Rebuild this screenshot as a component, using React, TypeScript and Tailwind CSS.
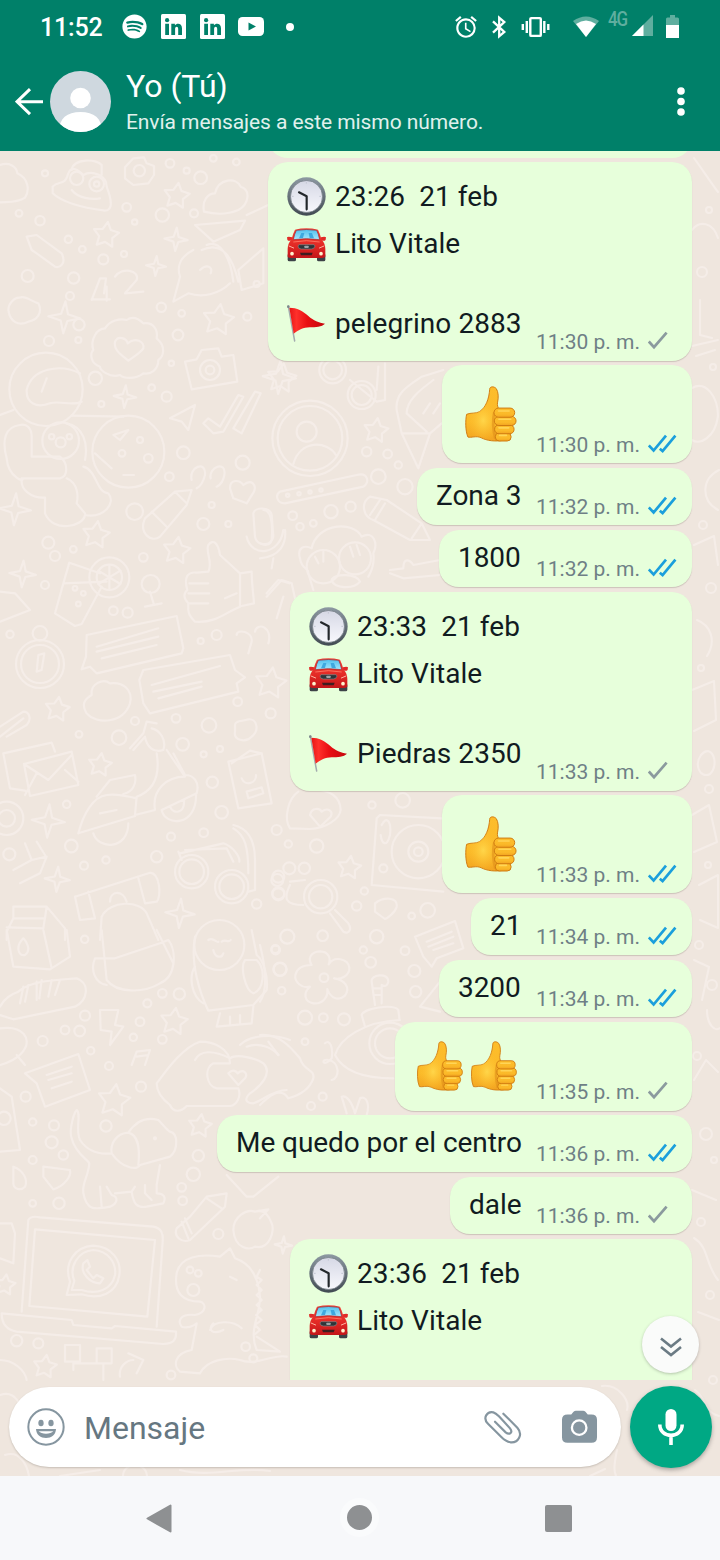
import type { ReactNode } from "react";
import { FaSpotify } from "react-icons/fa";
import { MdAlarm } from "react-icons/md";

type Ride = { time: string; place?: string };
type Message = {
  id: number;
  sentAt?: string;
  read: boolean;
  width: string;
  text?: string;
  ride?: Ride;
  thumbs?: number;
};

const messages: Message[] = [
  { id: 1, sentAt: "11:30 p. m.", read: false, width: "w-[424px]", ride: { time: "23:26  21 feb", place: "pelegrino 2883" } },
  { id: 2, sentAt: "11:30 p. m.", read: true, width: "w-[250px]", thumbs: 1 },
  { id: 3, sentAt: "11:32 p. m.", read: true, width: "w-[275px]", text: "Zona 3" },
  { id: 4, sentAt: "11:32 p. m.", read: true, width: "w-[253px]", text: "1800" },
  { id: 5, sentAt: "11:33 p. m.", read: false, width: "w-[402px]", ride: { time: "23:33  21 feb", place: "Piedras 2350" } },
  { id: 6, sentAt: "11:33 p. m.", read: true, width: "w-[250px]", thumbs: 1 },
  { id: 7, sentAt: "11:34 p. m.", read: true, width: "w-[221px]", text: "21" },
  { id: 8, sentAt: "11:34 p. m.", read: true, width: "w-[253px]", text: "3200" },
  { id: 9, sentAt: "11:35 p. m.", read: false, width: "w-[297px]", thumbs: 2 },
  { id: 10, sentAt: "11:36 p. m.", read: true, width: "w-[475px]", text: "Me quedo por el centro" },
  { id: 11, sentAt: "11:36 p. m.", read: false, width: "w-[242px]", text: "dale" },
  { id: 12, read: false, width: "w-[402px]", ride: { time: "23:36  21 feb" } },
];

/* ---------- Wallpaper ---------- */

function polar(cx: number, cy: number, radii: number[], tilt: number) {
  return radii
    .map((r, i) => {
      const a = ((tilt + (i * 360) / radii.length) * Math.PI) / 180;
      return `${(cx + r * Math.sin(a)).toFixed(1)},${(cy - r * Math.cos(a)).toFixed(1)}`;
    })
    .join(" ");
}

const Stars = ({ at }: { at: number[][] }) => (
  <>
    {at.map(([x, y, r]) => (
      <polygon key={`${x}-${y}`} points={polar(x, y, [r, r * 0.52, r, r * 0.52, r, r * 0.52, r, r * 0.52, r, r * 0.52], 8)} />
    ))}
  </>
);

const Sparkles = ({ at }: { at: number[][] }) => (
  <>
    {at.map(([x, y, r]) => (
      <polygon key={`${x}-${y}`} points={polar(x, y, [r, r * 0.3, r, r * 0.3, r, r * 0.3, r, r * 0.3], 4)} />
    ))}
  </>
);

const Rings = ({ at }: { at: number[][] }) => (
  <>
    {at.map(([x, y, r]) => (
      <circle key={`${x}-${y}-${r}`} cx={x} cy={y} r={r} />
    ))}
  </>
);

function Wallpaper() {
  return (
    <svg className="absolute inset-0 h-full w-full" viewBox="0 151 720 1325" fill="none" stroke="#f5ede8" strokeWidth="6.500" strokeLinecap="round" strokeLinejoin="round">
      <g transform="translate(0 150) scale(.33333)">
        <path d="M0 45C25 35 50 48 52 70C85 85 90 120 75 143C50 160 20 155 0 157" />
        <path d="M215 60C220 25 290 25 305 45V75M158 110C175 90 195 110 205 70C215 45 235 60 250 75C275 60 320 75 320 110C335 150 340 180 315 182C260 175 190 160 158 130ZM215 120C235 145 275 150 300 145" />
        <path d="M400 25L432 22L440 40L462 48V75L445 100L400 105L375 85V52Z" />
        <path d="M612 185C605 150 625 130 645 130C655 85 710 80 722 110C755 120 745 165 715 180C680 195 640 192 612 185ZM585 225L735 212L720 240L640 275ZM605 300C670 270 700 330 715 395M620 285C655 270 690 310 700 395M580 300C540 320 530 350 540 380L520 455L565 430C610 445 660 430 690 400M600 360C620 340 640 350 632 370M715 360L790 295V400L725 420Z" />
        <path d="M740 195L805 165M80 260L110 255L185 310C200 340 180 355 165 350L110 310L95 300Z" />
        <path d="M275 450L300 385H318L312 430M275 448H330M320 410V452M345 380C365 350 420 360 410 390L375 430L430 425" />
        <path d="M25 480C25 460 45 440 60 443C75 435 95 455 115 460C130 490 110 510 85 515C55 530 30 515 25 480Z" />
        <path d="M380 510C400 495 420 510 430 520C460 515 475 540 470 565C500 590 490 620 475 630C475 660 450 675 430 670C405 690 370 685 360 675C330 685 300 660 300 650C270 640 270 610 280 600C270 570 290 535 315 535C330 510 360 505 380 510Z" />
        <path d="M345 575C355 555 380 565 383 580C405 560 435 575 430 595C420 610 400 620 385 632C365 615 340 600 345 575Z" />
        <circle cx="138" cy="718" r="110" />
        <path d="M240 670C180 640 95 655 80 720C78 760 110 775 150 760C180 750 215 770 245 755M125 725L140 685M0 795L40 780M60 825C15 830 5 870 20 925C25 985 80 1000 65 985H180C205 980 205 940 180 920H95V860C95 835 80 820 60 825M215 797L370 800M65 985C60 1020 95 1045 135 1043V1090C160 1150 250 1130 255 1095C310 1105 350 1060 325 1030C290 1030 290 960 250 950M200 985C235 1000 235 1040 230 1060L255 1090M200 820C250 830 265 880 255 930" />
        <circle cx="182" cy="872" r="55" />
        <circle cx="385" cy="905" r="108" />
        <path d="M340 855L385 840L360 870ZM285 910L335 955M370 975H402" />
        <path d="M555 635L590 628L605 600L655 595L665 620L700 615L712 695L575 718Z" />
        <circle cx="630" cy="660" r="30" />
        <path d="M510 805L585 765L565 840L545 815ZM610 820L640 850L670 845L730 740L715 735L660 830L625 805ZM700 835L725 850L782 730L765 725Z" />
        <path d="M575 990C565 950 620 930 615 975C610 995 600 1010 590 1015M632 985C625 950 680 930 673 975C670 995 660 1005 650 1010M690 1015C690 985 720 990 730 1005C755 985 770 1005 762 1025L740 1060L700 1045Z" />
        <path d="M435 1105L525 1025L575 1020L560 1065L480 1160C455 1180 415 1150 435 1105ZM525 1025L560 1060M455 1085L500 1130M760 1090C765 1070 810 1070 815 1095L820 1160C815 1190 770 1190 765 1160ZM740 1160C755 1225 840 1215 850 1140" />
        <Stars at={[[318, 255, 40], [530, 138, 40], [655, 510, 48], [288, 1155, 42], [845, 685, 45]]} />
        <Sparkles at={[[528, 268, 35], [468, 348, 30], [193, 502, 48], [45, 1078, 48], [375, 740, 34]]} />
        <Rings at={[[230, 85, 20], [290, 102, 22], [290, 102, 8], [418, 62, 17], [602, 83, 19], [487, 195, 20], [510, 40, 13], [120, 212, 14], [380, 172, 13], [205, 268, 11], [310, 328, 15], [83, 378, 18], [221, 384, 17], [210, 438, 12], [237, 524, 17], [147, 573, 15], [484, 472, 14], [534, 555, 16], [286, 685, 20], [630, 660, 13], [500, 740, 15], [550, 908, 19], [728, 938, 21], [508, 980, 13], [404, 1085, 25], [610, 1122, 18], [145, 1178, 18], [182, 877, 15], [155, 860, 8], [208, 860, 8], [366, 910, 10], [420, 870, 9], [445, 925, 13], [135, 70, 9], [57, 190, 10], [247, 298, 10], [404, 216, 8], [372, 312, 9], [545, 490, 10], [235, 570, 9], [514, 640, 8], [455, 713, 10], [304, 762, 9], [685, 1122, 9], [635, 1065, 9], [582, 190, 12], [560, 62, 9], [640, 25, 10], [709, 36, 10], [770, 402, 9], [742, 500, 12]]} />
      </g>
      <g transform="translate(0 540) scale(.33333)">
        <path d="M208 68L190 130L165 220L225 258L245 252L305 140M190 130L320 125M208 68L300 100" />
        <circle cx="328" cy="112" r="60" />
        <circle cx="328" cy="112" r="38" />
        <path d="M328 76V148M295 92L361 132M295 132L361 92M450 155L462 195L435 200L485 190M0 155L45 160L90 210L0 245" />
        <circle cx="452" cy="132" r="27" />
        <path d="M625 95C640 65 615 35 625 15C640 -5 655 10 660 45L720 100V200C680 215 650 250 585 245C560 220 565 210 565 190C550 175 550 160 562 150C550 110 565 95 590 98ZM568 130H625M565 160H628M570 190H625M720 100L755 95C755 130 760 160 762 190L725 198M675 175L710 160" />
        <path d="M260 285L530 228L550 325L545 340L290 400L270 380L245 388L258 350ZM290 320L475 265M290 335L475 290M305 355L470 315" />
        <path d="M430 390L690 345L705 390L735 412L710 430L715 455L450 520L430 490L418 420ZM455 435L660 378M460 455L605 425M475 475L605 440" />
        <circle cx="120" cy="372" r="72" />
        <circle cx="120" cy="372" r="57" />
        <circle cx="120" cy="280" r="22" />
        <path d="M110 395L115 345L133 340L125 390ZM275 465C270 430 310 415 330 430C370 425 400 450 390 490C370 550 290 555 260 520C245 495 250 480 275 465Z" />
        <path d="M0 560L70 515C90 515 95 540 80 555L20 590M0 590L70 535M10 640L155 608L165 635M10 640L30 745L75 752M72 672L215 635L235 735L90 768ZM72 672L145 720L215 645M75 765L110 700M235 725L195 690" />
        <path d="M390 625L430 580L440 545L470 550M400 630L435 590C440 620 460 640 490 630C500 600 480 570 455 565M470 640C480 700 465 750 410 770L405 825L465 810C455 750 500 710 555 710L500 630M520 640L555 705C580 705 600 725 590 760L485 810M235 880C250 820 280 770 320 765C350 760 390 770 410 775M235 880L405 828M290 770L330 720L405 705C410 730 400 755 370 762M300 820L350 810M280 880C295 930 385 930 385 850M485 810C495 860 590 860 588 765M510 800C520 825 555 820 552 780M705 555C705 540 730 545 745 538C770 535 780 570 755 590C735 610 700 600 705 575Z" />
        <path d="M685 665L785 640L815 790L715 805ZM695 670L750 632L785 640M725 715C735 740 770 730 768 705M740 755L785 742L790 760L745 775ZM710 285C710 265 760 275 755 305L745 340M765 275C770 245 820 260 805 310M800 160L835 120L868 130M850 170L830 235" />
        <path d="M540 940L670 910C700 920 720 950 718 965M535 935L545 960M555 930L680 925L700 965M700 855C745 865 765 900 765 960V1050L745 1055M700 865C735 885 745 920 745 1000" />
        <circle cx="575" cy="995" r="50" />
        <circle cx="575" cy="995" r="37" />
        <circle cx="695" cy="1040" r="50" />
        <circle cx="695" cy="1040" r="37" />
        <path d="M225 1070L450 998C480 1000 485 1070 470 1085L435 1090L415 1015M225 1070L240 1140L285 1135L265 1055M300 1200L305 1130C330 1080 420 1080 440 1120L475 1200M330 1085C330 1050 370 1050 380 1085M40 1100H140L135 1135H40ZM40 1135L20 1175V1200M20 1162L130 1165L140 1100L195 1165V1200M75 910L95 960L40 990M95 960L140 950L120 1000L60 1030M110 905L135 945" />
        <Stars at={[[172, 508, 38], [300, 675, 36], [812, 430, 48], [530, 32, 42]]} />
        <Sparkles at={[[68, 102, 40], [145, 843, 50], [172, 1018, 38], [540, 1120, 44]]} />
        <Rings at={[[165, 48, 15], [220, 28, 10], [430, 52, 13], [340, 212, 13], [383, 218, 15], [650, 285, 15], [602, 303, 9], [357, 593, 22], [548, 613, 19], [627, 556, 22], [528, 535, 13], [405, 543, 12], [713, 485, 13], [812, 520, 15], [637, 727, 17], [665, 817, 19], [214, 918, 19], [28, 943, 18], [470, 950, 17], [318, 960, 11], [252, 977, 12], [513, 890, 12], [611, 878, 13], [830, 870, 15], [770, 1092, 14], [135, 135, 12], [30, 283, 11], [237, 583, 10], [611, 643, 9], [660, 627, 9], [200, 793, 11], [20, 835, 25], [20, 835, 50], [835, 1010, 18], [835, 1060, 18], [225, 145, 7], [250, 160, 7], [235, 192, 7]]} />
      </g>
      <g transform="translate(0 930) scale(.33333)">
        <path d="M20 0L40 110L150 118L210 80L200 0M130 0L155 115M70 25C45 50 55 80 75 75C95 60 80 35 70 25ZM305 0L320 150C350 190 430 190 480 160C530 140 530 60 505 30L480 40L345 85H285C270 120 285 160 320 165M470 0L520 100M0 230C15 200 40 190 55 185C95 150 170 150 230 145C270 160 265 210 225 230L40 268L0 255M70 170L60 220M85 165L75 215M110 155V210M125 150L118 205M155 150L145 200M180 150L165 195" />
        <circle cx="658" cy="45" r="75" />
        <path d="M585 20C570 100 600 190 625 242L760 225L800 180C805 140 790 90 770 75L755 0M625 30C640 20 650 40 655 35M665 35C675 25 685 40 692 30M640 60C645 85 665 85 670 70M735 90C720 110 735 180 760 190C790 180 800 120 770 90ZM585 110C565 140 575 200 610 220M660 250L650 290L755 280L760 230M690 260V285M720 255V280" />
        <path d="M300 240L355 240L345 285L370 290L330 345L335 305L302 300ZM75 430L235 372L270 480L135 530L110 460ZM140 435L215 410M145 450L215 430M155 475L215 455M395 405L410 365L450 360L435 405M410 380L445 375M0 295C75 285 90 330 75 355C60 385 20 400 0 405M50 375L75 405M0 475L35 500L60 660L0 665" />
        <path d="M470 460C500 420 550 350 600 335C640 335 690 355 690 400H640C610 415 620 470 650 475H715C725 500 710 525 690 528H560C545 545 520 550 510 525C490 510 470 490 470 460ZM585 390C600 360 640 360 690 385M690 385C710 370 770 385 790 400C820 430 780 470 750 490C730 510 740 520 760 520C790 510 820 480 860 480M720 345C750 315 820 310 870 330M740 350C780 335 820 355 835 375M685 430C700 415 710 425 713 430C730 415 745 430 735 445L715 465Z" />
        <path d="M215 625C205 600 225 540 230 540C245 550 225 600 240 630C260 660 290 675 335 670C330 640 350 610 385 608C410 570 440 560 475 570C490 585 500 600 510 605C535 610 535 660 510 680L420 705C415 720 370 720 335 670M215 625C225 670 265 690 268 700C265 740 245 760 250 790C260 840 280 840 330 830C355 820 355 800 335 795L320 770M385 608C415 615 420 660 415 705M345 790L395 785C400 820 410 835 440 830L490 820C500 800 490 790 470 790V765L480 705M405 770L395 785M435 765V790L455 810M300 770L305 830M40 710C70 720 85 750 75 770C60 785 40 775 40 760ZM130 710L210 720C215 740 190 770 160 778L130 740Z" />
        <path d="M85 870C90 860 100 858 120 862L460 890C485 895 490 910 488 935L470 1190M85 870L65 1145M105 898L465 930L442 1160L88 1128ZM5 1150L215 1170L220 1185L335 1195L345 1188L528 1205C530 1230 520 1240 490 1242L50 1205C20 1200 5 1180 5 1150Z" />
        <path d="M200 1095L210 1055C190 1000 225 950 280 947C335 950 365 990 358 1035C350 1090 300 1110 245 1093ZM215 1080L223 1053C205 1010 235 963 280 960C325 962 350 1000 345 1035C335 1080 290 1095 245 1080ZM250 1000C240 1030 270 1060 300 1060L310 1045L290 1035L280 1045L260 1020L270 1010L262 990Z" />
        <path d="M530 895L570 860L620 800L680 790L675 830L570 930C545 940 520 920 530 895ZM555 865L575 910M545 875L565 925M620 805L665 835M765 845C740 835 700 860 700 900C705 960 750 960 765 950C810 960 825 900 815 880C800 840 780 840 765 845ZM765 845L805 838L780 865M680 735L740 800L760 800L835 740" />
        <path d="M530 1030C540 980 600 970 660 980L690 955L705 985C750 1000 775 1040 780 1100C780 1160 745 1200 770 1260L840 1265L770 1220M530 1030C520 1090 550 1115 600 1115C620 1120 620 1150 585 1155C545 1150 530 1170 545 1190C560 1195 580 1190 590 1180L575 1260C520 1270 520 1310 540 1325L600 1330C620 1290 680 1280 720 1290C770 1310 820 1270 860 1280M630 1200C640 1170 700 1170 725 1195M640 1180C620 1200 640 1215 670 1200M690 1040L710 1050M780 1020L770 1040L785 1050L770 1065L785 1080L770 1095L785 1110L770 1125L785 1140L768 1155L785 1170L765 1185L780 1200L762 1215" />
        <path d="M195 1245H240V1295H195ZM290 1255H335V1300H290ZM220 1320V1300H310V1350M385 1270L430 1290L410 1330M360 1340C355 1310 380 1290 400 1290M0 1290C40 1290 75 1320 80 1350M0 880L35 880L45 910L40 1000L0 985" />
        <Stars at={[[522, 275, 42], [342, 512, 50], [600, 588, 36], [135, 1310, 36], [15, 1065, 32]]} />
        <Sparkles at={[[850, 945, 26]]} />
        <Rings at={[[538, 192, 17], [487, 190, 13], [442, 220, 12], [255, 257, 15], [420, 275, 13], [239, 303, 16], [195, 300, 13], [128, 333, 15], [400, 322, 11], [487, 328, 13], [272, 362, 11], [327, 408, 12], [423, 470, 15], [77, 500, 15], [318, 588, 17], [162, 586, 15], [155, 637, 18], [190, 675, 14], [98, 690, 12], [98, 576, 11], [595, 677, 17], [580, 733, 20], [545, 772, 13], [548, 812, 13], [177, 820, 17], [655, 912, 15], [50, 1232, 17], [115, 1240, 15], [570, 1020, 10], [595, 1030, 10], [580, 1080, 18], [827, 60, 13], [840, 118, 19], [845, 182, 11], [737, 1250, 13], [760, 1285, 12], [513, 1335, 13], [12, 565, 20], [254, 28, 11], [465, 625, 3], [98, 820, 10]]} />
      </g>
      <g transform="translate(260 360) scale(.33333)">
        <circle cx="150" cy="235" r="113" />
        <circle cx="150" cy="235" r="97" />
        <circle cx="140" cy="215" r="30" />
        <path d="M100 312C120 240 200 240 228 285M60 395L290 345C325 335 330 370 310 380L75 430C50 430 45 405 60 395ZM120 595C110 560 135 555 155 565C170 490 280 480 305 530C340 510 355 550 340 580M120 595C125 630 145 620 145 640L160 690M340 580C345 620 330 640 325 650M330 410C300 430 310 470 340 480L450 540H510L485 490L380 420ZM375 430L345 480M360 420L330 465M485 490L455 535M10 450C30 450 40 480 35 540C30 560 10 555 0 550M75 510C80 550 60 590 0 595M40 595L35 625M20 710L65 660L95 670L105 715M410 150C405 100 440 80 485 50L550 30M410 150L425 220H510L545 190M510 220L475 325L425 220M440 160C440 120 480 90 520 60M440 160L500 215M490 160L510 130M520 160L540 130M390 630L430 625C430 590 450 600 460 615L540 600M390 640L430 655L540 645M375 10V120L350 125L270 60M355 20L350 90M215 660C220 640 290 640 300 665C280 690 220 685 215 660M165 590L175 610M190 575V605M270 560L280 590M290 555L300 585" />
        <circle cx="218" cy="30" r="40" />
        <circle cx="218" cy="30" r="28" />
        <circle cx="305" cy="105" r="42" />
        <circle cx="305" cy="105" r="30" />
        <circle cx="190" cy="620" r="50" />
        <circle cx="285" cy="595" r="48" />
        <Stars at={[[348, 212, 38]]} />
        <Sparkles at={[[58, 52, 50]]} />
        <Rings at={[[320, 275, 14], [383, 282, 13], [355, 350, 22], [435, 380, 23], [213, 455, 20], [272, 440, 15], [98, 467, 13], [120, 500, 11], [160, 490, 10], [415, 315, 11], [83, 406, 5], [117, 401, 5], [150, 396, 5], [183, 390, 5]]} />
      </g>
      <g transform="translate(260 785) scale(.33333)">
        <path d="M90 130C70 100 85 40 115 20M90 130L150 132C200 130 240 100 242 75C240 30 205 20 180 15M150 90C155 65 180 70 185 80C205 65 220 80 212 95L180 125ZM350 100L360 90L545 100M350 100L335 300L550 320M365 120C380 90 395 110 390 150C380 190 365 175 362 150" />
        <circle cx="475" cy="200" r="80" />
        <circle cx="475" cy="200" r="30" />
        <circle cx="475" cy="200" r="13" />
        <circle cx="182" cy="335" r="50" />
        <circle cx="182" cy="335" r="35" />
        <path d="M90 290L135 285M90 300C70 340 75 360 130 360M210 385L250 440C270 450 275 430 265 415L225 375M345 355C370 335 415 335 410 365C405 385 380 400 375 402L345 380ZM465 455L585 408L610 490L530 520L515 545L490 515ZM500 470L575 440M505 485L580 455M520 495L580 475M345 660L335 590C330 570 385 560 385 590C380 610 365 600 365 600V655M340 610H365M340 630H365M305 690C310 670 400 655 415 675L418 700M305 690L315 725M225 810C240 760 310 710 420 705M225 810C250 860 310 880 400 880M195 775C210 760 220 790 215 820C190 850 180 820 205 825C240 830 240 880 215 885M480 665L540 590M480 665L540 680M0 750C60 745 95 790 120 820C130 860 165 850 160 880C150 910 120 930 85 940C60 900 20 940 0 960M25 770L55 810M260 985L245 935C260 930 275 950 285 985L300 940C320 930 330 960 320 990M0 480C20 560 20 620 0 650" />
        <path d="M155 540C142 520 153 500 180 499C207 500 213 520 206 538C222 512 264 520 268 548C270 572 240 586 222 580C255 585 272 608 255 632C235 650 212 640 202 612C205 640 185 658 160 655C133 650 128 625 150 605C125 612 103 590 106 570C112 545 135 540 155 540Z" />
        <circle cx="192" cy="578" r="13" />
        <circle cx="390" cy="775" r="62" />
        <circle cx="390" cy="775" r="45" />
        <Stars at={[[268, 248, 36]]} />
        <Rings at={[[428, 46, 22], [336, 60, 11], [170, 183, 20], [85, 177, 11], [88, 250, 18], [52, 285, 18], [55, 328, 18], [133, 250, 17], [313, 318, 11], [290, 363, 14], [503, 376, 22], [455, 393, 10], [82, 455, 21], [188, 452, 16], [350, 455, 20], [46, 492, 12], [60, 553, 20], [332, 532, 16], [463, 558, 18], [135, 698, 21], [190, 698, 13], [252, 703, 18], [467, 620, 17], [435, 497, 13], [310, 495, 11], [370, 250, 12], [188, 935, 12], [153, 963, 12], [135, 770, 10]]} />
      </g>
      <g strokeWidth="2.100">
        <path d="M694 158C704 172 712 184 718 192M692 230C699 220 713 222 718 238M700 300V335L712 338M692 346L718 340M696 356L715 350M692 388C706 380 718 397 718 416C715 438 700 445 692 440M719 470C702 478 700 500 718 510M694 545L714 536L718 565M697 620C710 625 717 640 707 656M692 690L714 681L716 720L694 731M701 755C712 742 720 765 710 774C700 779 694 765 701 755M692 815L709 805L717 842L694 852M699 885L718 875V928L700 920M694 960L709 967L702 1000M707 1010C707 1025 715 1032 720 1028M694 1080L706 1060L718 1072M692 1190L716 1200M694 1238C709 1247 705 1264 718 1280M698 1312L719 1320" />
        <Rings at={[[709, 210, 3], [702, 272, 5], [713, 367, 3], [703, 525, 4], [711, 588, 5], [701, 668, 3], [709, 789, 4], [708, 865, 3], [699, 945, 4], [712, 985, 5], [697, 1056, 4], [706, 1134, 6], [714, 1160, 3], [701, 1222, 4], [710, 1295, 4], [713, 1380, 4]]} />
        <path d="M0 1395C15 1390 24 1405 20 1420M5 1455C20 1450 27 1465 29 1476M60 1476L100 1470M123 1476C123 1462 146 1461 147 1476M180 1470C210 1478 240 1466 270 1471M590 1476L605 1469M617 1450C615 1460 613 1470 616 1476M695 1390C708 1400 703 1412 719 1416M602 1386C618 1384 630 1400 627 1410" />
      </g>
    </svg>
  );
}

/* ---------- Emoji ---------- */

function ClockEmoji() {
  return (
    <svg className="h-[39px] w-[39px]" viewBox="0 0 117 117">
      <defs>
        <linearGradient id="clock-rim" x1="0" y1="0" x2="0" y2="1">
          <stop offset="0" stopColor="#8d99a2" />
          <stop offset="1" stopColor="#414a52" />
        </linearGradient>
        <linearGradient id="clock-face" x1="0" y1="0" x2="0" y2="1">
          <stop offset="0" stopColor="#d6d8e5" />
          <stop offset="1" stopColor="#f8f8fd" />
        </linearGradient>
      </defs>
      <circle cx="58.500" cy="58.500" r="57.500" fill="url(#clock-rim)" />
      <circle cx="58.500" cy="58.500" r="48" fill="url(#clock-face)" stroke="#6b747c" strokeWidth="2" />
      <path d="M58 14V20M58 97V103M14 58H20M97 58H103" stroke="#c3c6d3" strokeWidth="3" />
      <path d="M36 46L59 58V97" fill="none" stroke="#23272b" strokeWidth="6.500" strokeLinecap="round" strokeLinejoin="round" />
    </svg>
  );
}

function CarEmoji() {
  return (
    <svg className="mt-[3px] h-[34px] w-[39px]" viewBox="0 0 117 102" preserveAspectRatio="none">
      <defs>
        <linearGradient id="car-body" x1="0" y1="0" x2="0" y2="1">
          <stop offset="0" stopColor="#f4473c" />
          <stop offset=".55" stopColor="#e32a25" />
          <stop offset="1" stopColor="#c3161a" />
        </linearGradient>
        <linearGradient id="car-glass" x1="0" y1="0" x2="0" y2="1">
          <stop offset="0" stopColor="#4fc0ee" />
          <stop offset="1" stopColor="#a7e6fb" />
        </linearGradient>
      </defs>
      <rect x="2" y="76" width="25" height="24" rx="5" fill="#3d4247" />
      <rect x="90" y="76" width="25" height="24" rx="5" fill="#3d4247" />
      <path d="M0 28Q3 24 16 28L17 38H4Q0 37 0 28ZM117 28Q114 24 101 28L100 38H113Q117 37 117 28Z" fill="#e12b28" />
      <path d="M24 5Q58 -3 93 5Q99 16 104 36Q114 44 115 62V86Q110 91 101 90H16Q5 91 2 86V62Q3 44 13 36Q18 16 24 5Z" fill="url(#car-body)" />
      <path d="M28 7Q58 2 89 7Q95 18 98 35Q58 29 19 35Q22 18 28 7Z" fill="url(#car-glass)" stroke="#a91f22" strokeWidth="2" />
      <path d="M36 31L43 15H52L48 30M68 30L65 15H75L81 31" fill="#3ea8df" />
      <path d="M19 42Q58 34 98 42" fill="none" stroke="#ff7d68" strokeWidth="2.500" />
      <path d="M36 50H81L84 54Q82 63 73 63H43Q34 63 33 54Z" fill="#2f3438" stroke="#82878a" strokeWidth="2" />
      <rect x="52" y="53" width="13" height="7" rx="2" fill="#9da3a6" />
      <path d="M39 74H77L74 82H42Z" fill="#3f1d20" />
      <path d="M6 54L20 60M111 54L97 60" stroke="#ffb3a0" strokeWidth="3" strokeLinecap="round" />
      <circle cx="15" cy="77" r="5.500" fill="#fff3cf" />
      <circle cx="102" cy="77" r="5.500" fill="#fff3cf" />
    </svg>
  );
}

function FlagEmoji() {
  return (
    <svg className="h-[38px] w-[39px]" viewBox="0 0 117 114">
      <defs>
        <linearGradient id="flag-cloth" x1="0" y1="0" x2="1" y2="0">
          <stop offset="0" stopColor="#e51616" />
          <stop offset=".2" stopColor="#ff302b" />
          <stop offset=".5" stopColor="#e90e12" />
          <stop offset="1" stopColor="#c4080d" />
        </linearGradient>
      </defs>
      <path d="M4 4L23 108" stroke="#a3abae" strokeWidth="4.500" strokeLinecap="round" />
      <path d="M7 8C30 8 48 18 64 33C80 47 95 53 114 56C104 66 86 66 68 67C48 68 36 74 20 86Z" fill="url(#flag-cloth)" />
      <circle cx="4" cy="5" r="4" fill="#7c858a" />
    </svg>
  );
}

function ThumbEmoji({ size }: { size: string }) {
  return (
    <svg className={size} viewBox="0 0 156 170">
      <defs>
        <linearGradient id="thumb-skin" x1="0" y1="0" x2="0" y2="1">
          <stop offset="0" stopColor="#fdbd2b" />
          <stop offset=".65" stopColor="#fbba29" />
          <stop offset="1" stopColor="#f2a321" />
        </linearGradient>
        <radialGradient id="thumb-palm" cx=".45" cy=".62" r=".4">
          <stop offset="0" stopColor="#ffd64a" />
          <stop offset="1" stopColor="#fdbd2b" stopOpacity="0" />
        </radialGradient>
      </defs>
      <path d="M74 10C74 0 88 1 94 8C101 18 101 37 98 49C96 59 99 64 102 70L119 77V164C91 170 65 166 48 157C34 150 17 158 8 155C0 137 0 104 4 86C17 80 31 85 43 78C63 65 72 38 74 10Z" fill="url(#thumb-skin)" stroke="#d17c12" strokeWidth="3" />
      <path d="M74 10C74 0 88 1 94 8C101 18 101 37 98 49C96 59 99 64 102 70L119 77V164C91 170 65 166 48 157C34 150 17 158 8 155C0 137 0 104 4 86C17 80 31 85 43 78C63 65 72 38 74 10Z" fill="url(#thumb-palm)" />
      <path d="M88 80C82 105 84 132 91 160" fill="none" stroke="#e0901a" strokeWidth="8" opacity=".6" />
      <g fill="url(#thumb-skin)" stroke="#cf7b10" strokeWidth="3">
        <rect x="91" y="142" width="48" height="25" rx="12" />
        <rect x="89" y="118" width="59" height="27" rx="13" />
        <rect x="88" y="92" width="66" height="28" rx="14" />
        <rect x="87" y="67" width="63" height="28" rx="14" />
      </g>
      <path d="M101 76H133M102 101H138M102 127H132M104 150H125" stroke="#ffd557" strokeWidth="5" strokeLinecap="round" />
    </svg>
  );
}

/* ---------- Messages ---------- */

function Receipt({ sentAt, read }: { sentAt: string; read: boolean }) {
  return (
    <div className="flex h-6 w-[156px] shrink-0 items-center text-[21px] leading-6 text-[#6f7f86]">
      <span className="w-[111.500px] whitespace-nowrap">{sentAt}</span>
      <svg className="h-6 w-[30px]" viewBox="0 0 30 24" fill="none" strokeWidth="2.700">
        {read ? (
          <path d="M.8 12.500L5.600 17.500L18 2.700M11.800 15.700L14.600 18L27.400 2.700" stroke="#1b9fdc" />
        ) : (
          <path d="M.8 11.500L6 17.200L18.600 2.700" stroke="#8b9a9e" />
        )}
      </svg>
    </div>
  );
}

function RideRow({ icon, children }: { icon: ReactNode; children: ReactNode }) {
  return (
    <div className="flex h-[47px] items-center">
      <span className="flex w-[48px] shrink-0">{icon}</span>
      <span className="whitespace-pre leading-[47px] tracking-[0.080px]">{children}</span>
    </div>
  );
}

function Bubble({ message }: { message: Message }) {
  const { ride, text, thumbs, width, sentAt, read } = message;
  const size = ride
    ? "h-[199px] mb-1 pb-[7px]"
    : thumbs === 2
      ? "h-[89px] mb-1 pb-[7px]"
      : thumbs
        ? "h-[98px] mb-[5px] pb-[6px]"
        : "h-[57px] mb-[5px] pb-[6px]";
  return (
    <article className={`flex shrink-0 items-end rounded-[20px] bg-[#e7ffdb] pl-[19px] shadow-[0_1px_1px_rgba(80,70,60,0.22)] ${width} ${size}`}>
      <div className="-mb-[7px] min-w-0 flex-1 self-stretch text-[28px] text-[#111b21]">
        {ride && (
          <div className="pt-[11px]">
            <RideRow icon={<ClockEmoji />}>{ride.time}</RideRow>
            <RideRow icon={<CarEmoji />}>Lito Vitale</RideRow>
            {ride.place && (
              <div className="pt-[33px]">
                <RideRow icon={<FlagEmoji />}>{ride.place}</RideRow>
              </div>
            )}
          </div>
        )}
        {text && <p className="whitespace-nowrap leading-[55px] tracking-[-0.060px]">{text}</p>}
        {thumbs === 1 && (
          <div className="pl-1 pt-[21px]">
            <ThumbEmoji size="h-[56px] w-[52px]" />
          </div>
        )}
        {thumbs === 2 && (
          <div className="flex gap-2 pl-[3px] pt-[19px]">
            <ThumbEmoji size="h-[50px] w-[46px]" />
            <ThumbEmoji size="h-[50px] w-[46px]" />
          </div>
        )}
      </div>
      {sentAt && <Receipt sentAt={sentAt} read={read} />}
    </article>
  );
}

/* ---------- Header ---------- */

function LinkedInIcon() {
  return (
    <svg className="h-[25px] w-[25px]" viewBox="0 0 25 25">
      <rect width="25" height="25" rx="1.500" fill="#fff" />
      <circle cx="6.100" cy="6.200" r="2.100" fill="#008069" />
      <path d="M4.200 9.800H8V21H4.200ZM10.300 9.800H13.900V11.300C15.700 8.700 21 8.900 21 14.200V21H17.200V15C17.200 11.800 14.100 12 14.100 15V21H10.300Z" fill="#008069" />
    </svg>
  );
}

function Header() {
  return (
    <header className="h-[151px] shrink-0 bg-[#008069] text-white">
      <div className="flex h-[54px] items-center pl-[40px]">
        <span className="w-[82px] pt-px text-[25px] font-medium leading-[54px] tracking-[-0.2px]">11:52</span>
        <FaSpotify className="-mt-px h-[25px] w-[25px]" />
        <span className="-mt-px ml-[14px]"><LinkedInIcon /></span>
        <span className="-mt-px ml-[14px]"><LinkedInIcon /></span>
        <svg className="-mt-px ml-[13px] h-[19px] w-[26px]" viewBox="0 0 26 19">
          <rect width="26" height="19" rx="4.500" fill="#fff" />
          <path d="M10.500 5.500L18 9.500L10.500 13.500Z" fill="#008069" />
        </svg>
        <span className="-mt-px ml-[22px] h-2 w-2 rounded-full bg-white" />
        <MdAlarm className="ml-[159px] h-[26px] w-[26px]" />
        <svg className="ml-[7px] h-[26px] w-[26px]" viewBox="0 0 26 26" fill="none" stroke="#fff" strokeWidth="2.300" strokeLinejoin="miter">
          <path d="M7 7.300L18.300 18L13.200 22.300V3.700L18.300 8L7 18.700" />
        </svg>
        <svg className="-mt-px ml-[9px] h-[22px] w-[29px]" viewBox="0 0 29 22" fill="none" stroke="#fff" strokeWidth="2.400">
          <rect x="9.300" y="2.100" width="10.500" height="17.800" rx="1" />
          <path d="M5.800 5V17M1.800 8V14M23.300 5V17M27.300 8V14" />
        </svg>
        <svg className="-mt-px ml-[23px] h-[22px] w-[26px]" viewBox="0 0 26 22">
          <path d="M0 5Q13 -4 26 5L13 21Z" fill="#5fae9f" />
          <path d="M3 8Q13 1 23 8L13 21Z" fill="#fff" />
        </svg>
        <span className="-mt-[17px] ml-[9px] w-[24px] scale-y-115 text-[17px] font-medium leading-[20px] tracking-[-1.200px] text-[#5fae9f]">4G</span>
        <svg className="-mt-[4px] h-[21px] w-[21px]" viewBox="0 0 21 21">
          <path d="M0 21L21 0V21Z" fill="#5fae9f" />
          <path d="M0 21L11.500 9.500V21Z" fill="#fff" />
        </svg>
        <svg className="-mt-px ml-[13px] h-[23px] w-[13px]" viewBox="0 0 13 23">
          <path d="M0 4Q0 2.500 1.500 2.500H4V0H9V2.500H11.500Q13 2.500 13 4V23H0Z" fill="#5fae9f" />
          <path d="M0 10H13V23H0Z" fill="#fff" />
        </svg>
      </div>
      <div className="flex h-[95px] items-center pl-[15px]">
        <svg className="h-[28px] w-[29px]" viewBox="0 0 29 28" fill="none" stroke="#fff" strokeWidth="3">
          <path d="M28 13.700H2.500M15 1.200L2 13.700L15 26.200" />
        </svg>
        <svg className="ml-[6px] h-[61px] w-[61px]" viewBox="0 0 61 61">
          <defs>
            <clipPath id="avatar-clip">
              <circle cx="30.500" cy="30.500" r="30.500" />
            </clipPath>
          </defs>
          <g clipPath="url(#avatar-clip)">
            <rect width="61" height="61" fill="#cfd8df" />
            <circle cx="30.500" cy="27" r="10.300" fill="#fff" />
            <path d="M9 61C9 47 17 41 30.500 41S52 47 52 61Z" fill="#fff" />
          </g>
        </svg>
        <div className="ml-[15px] pt-[5px]">
          <h1 className="text-[32px] leading-[35px]">Yo (Tú)</h1>
          <p className="text-[21px] leading-[36px] tracking-[-0.080px] text-[#e0f1ed]">Envía mensajes a este mismo número.</p>
        </div>
        <svg className="ml-auto mr-[35px] h-[29px] w-[8px]" viewBox="0 0 8 29" fill="#fff">
          <circle cx="4" cy="4" r="3.800" />
          <circle cx="4" cy="14.500" r="3.800" />
          <circle cx="4" cy="25" r="3.800" />
        </svg>
      </div>
    </header>
  );
}

/* ---------- Composer and navigation ---------- */

function Composer() {
  return (
    <div className="relative mt-[7px] flex pl-[9px]">
      <div className="flex h-[80px] w-[612px] items-center rounded-full bg-white pl-[18px] pr-[23px] shadow-[0_1px_2px_rgba(80,70,60,0.25)]">
        <svg className="h-[38px] w-[38px]" viewBox="82 113 114 114" fill="none">
          <circle cx="139" cy="170" r="53" stroke="#8696a0" strokeWidth="6" />
          <ellipse cx="124" cy="158" rx="8" ry="10" fill="#8696a0" />
          <ellipse cx="154" cy="158" rx="8" ry="10" fill="#8696a0" />
          <path d="M109 176H169C168 194 155 203 139 203S110 194 109 176Z" fill="#8696a0" />
          <path d="M117 183H161Q154 190 139 190T117 183Z" fill="#fff" />
        </svg>
        <span className="ml-[19px] pt-[3px] text-[32px] leading-[77px] text-[#667781]">Mensaje</span>
        <svg className="ml-auto h-[34px] w-[38px]" viewBox="372 539 114 102" fill="none" stroke="#8696a0" strokeWidth="6.500" strokeLinecap="round">
          <path d="M430 550L472 592C490 612 475 638 452 636C440 635 432 628 424 620L384 580C367 563 381 542 400 546C408 548 413 554 419 560L450 594C460 607 448 615 437 606L405 574" />
        </svg>
        <svg className="ml-[39px] h-[34px] w-[37px]" viewBox="604 539 112 102">
          <path d="M624 552H635L642 544Q645 541 649 541H671Q675 541 678 544L685 552H696Q713 552 713 568V621Q713 638 696 638H624Q607 638 607 621V568Q607 552 624 552Z" fill="#8696a0" />
          <circle cx="659" cy="592" r="22" fill="none" stroke="#fff" strokeWidth="7" />
        </svg>
      </div>
      <button className="-mt-[1px] ml-[9px] flex h-[82px] w-[82px] items-center justify-center rounded-full bg-[#00a884] shadow-[0_2px_4px_rgba(60,60,60,0.4)]">
        <svg className="h-[36px] w-[26px]" viewBox="0 0 26 36" fill="none" stroke="#fff" strokeWidth="3.600">
          <rect x="7.500" y="0" width="11" height="22" rx="5.500" fill="#fff" stroke="none" />
          <path d="M1.800 15.500C1.800 30 24.200 30 24.200 15.500M13 26V36" />
        </svg>
      </button>
    </div>
  );
}

function NavigationBar() {
  return (
    <nav className="flex h-[84px] shrink-0 items-center bg-[#f7f8fa] pl-[146px]">
      <svg className="h-[29px] w-[26px]" viewBox="0 0 26 29">
        <path d="M1.500 14.500L24.500 1.500V27.500Z" fill="#8e9092" stroke="#8e9092" strokeWidth="2" strokeLinejoin="round" />
      </svg>
      <span className="-mt-px ml-[168px] h-[39px] w-[39px] rounded-full border-[7px] border-[#fafbfc] bg-[#8e9092]" />
      <span className="ml-[166px] h-[27px] w-[27px] rounded-[2px] bg-[#8e9092]" />
    </nav>
  );
}

export default function App() {
  return (
    <main className="flex h-[1560px] w-[720px] flex-col overflow-hidden font-['Roboto',sans-serif]">
      <Header />
      <section className="relative h-[1325px] shrink-0 bg-[#efe6de]">
        <Wallpaper />
        <div className="relative flex h-[1229px] flex-col items-end overflow-hidden pr-7">
          <div className="mb-1 h-[7px] w-[424px] shrink-0 overflow-hidden">
            <div className="-mt-[33px] h-10 rounded-[20px] bg-[#e7ffdb]" />
          </div>
          {messages.map((message) => (
            <Bubble key={message.id} message={message} />
          ))}
        </div>
        <button className="absolute right-[21px] top-[1165px] flex h-[57px] w-[57px] items-center justify-center rounded-full bg-[#fafbfa] shadow-[0_1px_3px_rgba(60,60,60,0.3)]">
          <svg className="mt-1 h-[20px] w-[22px]" viewBox="0 0 22 20" fill="none" stroke="#6b7b84" strokeWidth="2.600">
            <path d="M1 1.500L11 9.500L21 1.500M1 10L11 18L21 10" />
          </svg>
        </button>
        <Composer />
      </section>
      <NavigationBar />
    </main>
  );
}
